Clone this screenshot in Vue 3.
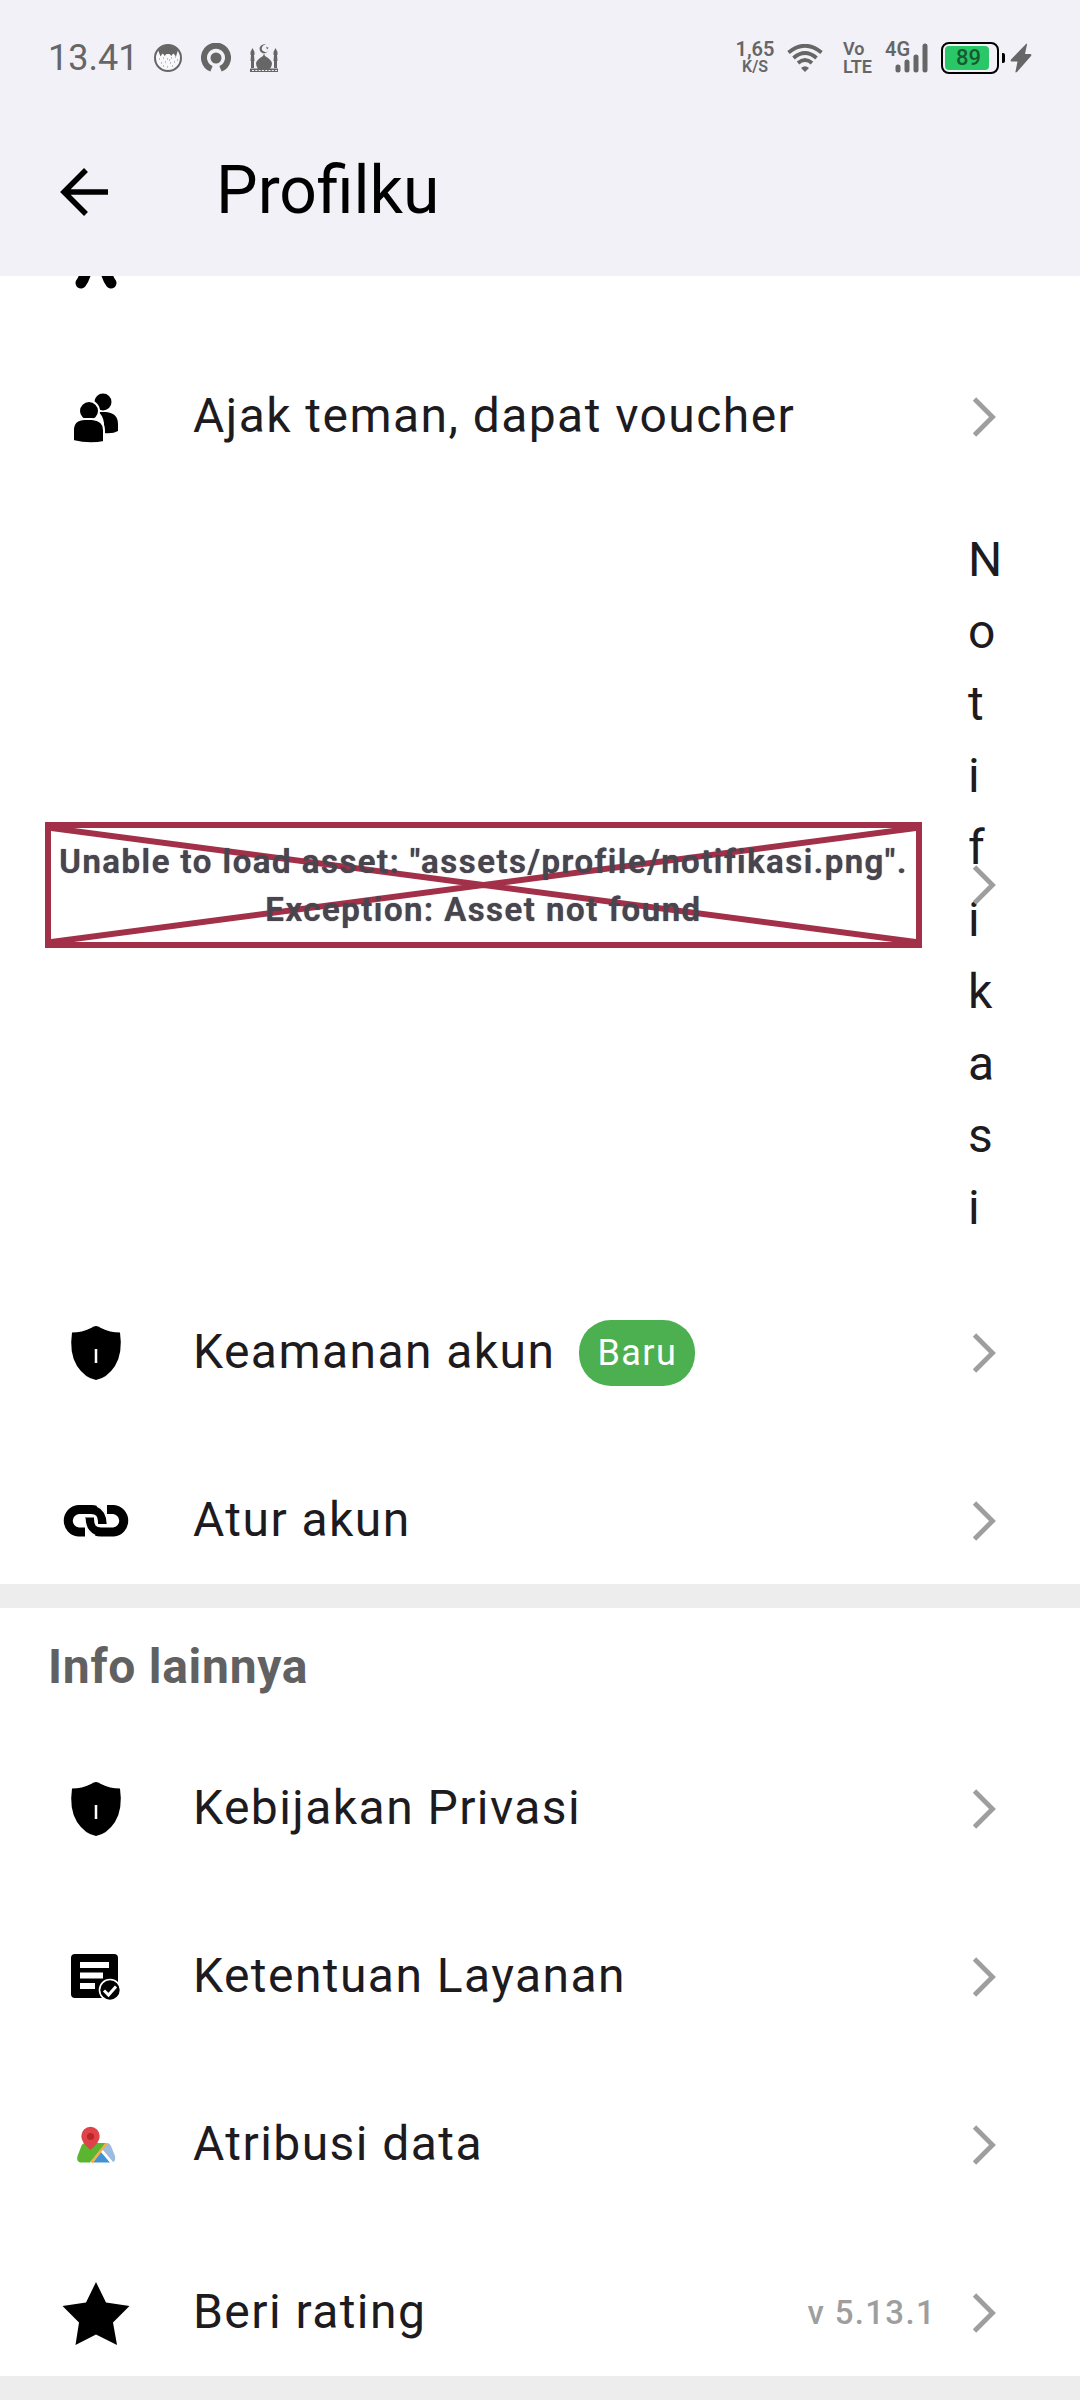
<script setup>
const accountItems = [
  { label: 'Ajak teman, dapat voucher', icon: 'people' },
  { label: 'Notifikasi', icon: 'missing' },
  { label: 'Keamanan akun', icon: 'shield', badge: 'Baru' },
  { label: 'Atur akun', icon: 'link' }
]

const infoItems = [
  { label: 'Kebijakan Privasi', icon: 'shield' },
  { label: 'Ketentuan Layanan', icon: 'terms' },
  { label: 'Atribusi data', icon: 'map' },
  { label: 'Beri rating', icon: 'star', note: 'v 5.13.1' }
]

const sections = [
  { id: 'account', title: '', items: accountItems },
  { id: 'info', title: 'Info lainnya', items: infoItems }
]
</script>

<template>
  <div class="screen">
    <header class="top">
      <div class="status">
        <div class="status-left">
          <span class="time">13.41</span>
          <svg class="status-icon" viewBox="0 0 30 30" aria-hidden="true">
            <circle cx="15" cy="15" r="13" fill="#f8f8fa" stroke="#666" stroke-width="2" />
            <path d="M5 7Q15-2 25 7L23 13.500L20.500 10.500Q19 11 18.500 13L16.500 11H13.500L11.500 13Q11 11 9.500 10.500L7.500 13.500Z" fill="#666" />
            <path d="M6 16h1M10 15h1M14 16h1M18 15h1M22 14h1M8 20h1M12 19h1M17 20h1M21 19h1M14 24h1M10 23h1M19 23h1M16 17h1M24 17h1" stroke="#888" stroke-width="1" />
          </svg>
          <svg class="status-icon" viewBox="0 0 30 30" aria-hidden="true">
            <path d="M10.500 25.800A12 12 0 1 1 19.500 25.800" fill="none" stroke="#666" stroke-width="6" stroke-linecap="butt" />
            <circle cx="15" cy="15" r="5.500" fill="#666" />
          </svg>
          <svg class="status-icon" viewBox="0 0 30 30" aria-hidden="true">
            <g fill="#666">
              <path d="M17.500 2A4.500 4.500 0 1 0 19 8A3.600 3.600 0 1 1 17.500 2Z" />
              <path d="M17 3.500l1.500 1 1-.5-.5 1.500-1 1z" />
              <path d="M15 10.500L16 13Q23 17 23 20.500Q23 23 21 26H9Q7 23 7 20.500Q7 17 14 13Z" />
              <path d="M3.500 5L5.500 9V12H5L5.500 18H5V25H2V18H1.500L2 12H1.500V9Z" />
              <path d="M26.500 5L28.500 9V12H28L28.500 18H28V25H25V18H24.500L25 12H24.500V9Z" />
              <path d="M1 25.500H29V29H1Z" />
            </g>
            <path d="M3 27.500H28" stroke="#f2f1f7" stroke-width="1.200" stroke-dasharray="2 1.300" />
          </svg>
        </div>
        <div class="status-right">
          <span class="speed"><span>1,65</span><small>K/S</small></span>
          <svg class="wifi" viewBox="0 0 36 28" aria-hidden="true">
            <g fill="none" stroke="#666" stroke-width="3.800">
              <path d="M1.500 8.500Q18-5 34.500 8.500" />
              <path d="M6.500 14Q18 4 29.500 14" />
              <path d="M11 19Q18 13 25 19" />
            </g>
            <path d="M14 24Q18 20.500 22 24L18 28Z" fill="#666" />
          </svg>
          <span class="volte">Vo<br />LTE</span>
          <span class="signal">
            <span class="network">4G</span>
            <svg viewBox="0 0 34 30" aria-hidden="true">
              <path d="M3 24V27M12 19V27M21 14V27M30 3V27" fill="none" stroke="#666" stroke-width="5" stroke-linecap="round" />
            </svg>
          </span>
          <span class="power">
            <span class="battery"><span class="level">89</span></span>
            <span class="nub"></span>
            <svg class="bolt" viewBox="0 0 22 30" aria-hidden="true">
              <path d="M16 1Q17 0 17 1.500L15 11H20.500Q22 11.500 21 13L7 29Q5 30 5.500 28.500L7.500 18.500H1.500Q0 18 1 16.500Z" fill="#666" />
            </svg>
          </span>
        </div>
      </div>
      <div class="toolbar">
        <button class="back" type="button" aria-label="Kembali">
          <svg viewBox="0 0 48 48" aria-hidden="true">
            <path d="M26 2L4 24L26 46M3 24H48" fill="none" stroke="#000" stroke-width="5.500" />
          </svg>
        </button>
        <h1>Profilku</h1>
      </div>
    </header>

    <main>
      <section v-for="section in sections" :key="section.id" class="section">
        <div v-if="section.id === 'account'" class="partial">
          <svg viewBox="0 0 96 36" aria-hidden="true">
            <path d="M33 7Q36 3 38 -4M63 7Q60 3 58 -4" fill="none" stroke="#000" stroke-width="11" stroke-linecap="round" />
          </svg>
        </div>
        <h2 v-if="section.title">{{ section.title }}</h2>

        <a
          v-for="item in section.items"
          :key="item.label"
          href="#"
          class="row"
          :class="{ broken: item.icon === 'missing' }"
        >
          <span v-if="item.icon === 'missing'" class="asset-error">
            <svg viewBox="0 0 100 100" preserveAspectRatio="none" aria-hidden="true">
              <path d="M0 0L100 100M0 100L100 0" />
            </svg>
            <span>Unable to load asset: "assets/profile/notifikasi.png".<br />Exception: Asset not found</span>
          </span>

          <svg v-else class="icon" viewBox="0 -1 96 96" aria-hidden="true">
            <g v-if="item.icon === 'people'">
              <circle cx="55" cy="33" r="8.500" />
              <path d="M50 43H58Q70 44 70 55V62Q65 65 56 64V54Q55 46 50 43Z" />
              <circle cx="41" cy="42" r="10" stroke="#fff" stroke-width="2" />
              <path d="M25 61Q25 50 37 50H44Q56 51 56 61V73Q41 76 25 72Z" stroke="#fff" stroke-width="2" />
            </g>
            <g v-else-if="item.icon === 'shield'">
              <path d="M48 21Q50 21 53 23Q62 27.500 72 27.500Q75 48 67 61Q59 73 48 75Q37 73 29 61Q21 48 24 27.500Q34 27.500 43 23Q46 21 48 21Z" />
              <path d="M48 44V58" stroke="#fff" stroke-width="2.500" />
            </g>
            <g v-else-if="item.icon === 'link'" fill="none" stroke="#000" stroke-width="9">
              <path d="M37 59H30.500A11.300 11.300 0 0 1 30.500 36.500H43Q54.500 36.500 54.500 49V51" />
              <path d="M59 36.500H65.500A11.300 11.300 0 0 1 65.500 59H53Q41.500 59 41.500 46V44.500" />
              <path d="M49 33Q59 37 59.500 51M47 62.500Q37 58 36.800 45" stroke="#fff" stroke-width="1.600" />
            </g>
            <g v-else-if="item.icon === 'terms'">
              <rect x="23" y="25" width="47" height="44" rx="4" />
              <path d="M32 36H61M32 46.500H55M32 57H47" stroke="#fff" stroke-width="6" />
              <circle cx="62" cy="61" r="10.500" stroke="#fff" stroke-width="1.600" />
              <path d="M56 61.500L60.500 66L68 57.500" fill="none" stroke="#fff" stroke-width="3" />
            </g>
            <g v-else-if="item.icon === 'map'" transform="translate(0 7)">
              <path d="M38 39H58L42 58.500H32Q28 57 29.500 52L33 43Q34 39 38 39Z" fill="#5bb531" />
              <path d="M57 39.500Q61 37.500 63 42L67 52Q68 57 65 58L54 45Z" fill="#9bbce0" />
              <path d="M53 48L62 58.500H45Z" fill="#4292d3" />
              <path d="M58.500 39.500L43.500 58.500" stroke="#f5ae42" stroke-width="2.400" />
              <path d="M54 47L63.500 58.500" stroke="#fff" stroke-width="2" />
              <path d="M42.500 46Q33 38 33.300 32A9.200 9.200 0 0 1 51.700 32Q52 38 42.500 46Z" fill="#de4349" />
              <circle cx="42.500" cy="32.500" r="3.600" fill="#bd2427" />
            </g>
            <path v-else d="M48 17L58 37.500L81.500 41L65 57.500L69 80L48 69.500L27.500 80L31 57.500L14.500 41L38 37.500Z" />
          </svg>

          <span class="label">{{ item.label }}</span>
          <span v-if="item.badge" class="badge">{{ item.badge }}</span>
          <span class="trail">
            <span v-if="item.note" class="note">{{ item.note }}</span>
            <svg class="chevron" viewBox="0 -1 48 48" aria-hidden="true">
              <path d="M14.500 6L32.500 24L14.500 42" fill="none" stroke="#9e9e9e" stroke-width="4.800" />
            </svg>
          </span>
        </a>
      </section>
    </main>
  </div>
</template>

<style>
body {
  background: #fff;
}
</style>

<style scoped>
.screen {
  font-family: Roboto, "Liberation Sans", sans-serif;
  color: #1d1b20;
  background: #fff;
}

svg {
  display: block;
}

.top {
  background: #f2f1f7;
  color: #000;
}

.status {
  display: flex;
  justify-content: space-between;
  align-items: center;
  height: 108px;
  padding: 8px 48px 0;
  box-sizing: border-box;
  color: #666;
}

.status-left {
  display: flex;
  align-items: center;
  gap: 18px;
}

.time {
  font-size: 36px;
  line-height: 42px;
  margin-right: -3px;
}

.status-icon {
  width: 30px;
  height: 30px;
}

.status-right {
  display: flex;
  align-items: center;
  gap: 12px;
  font-weight: 600;
}

.speed {
  display: flex;
  flex-direction: column;
  align-items: center;
  width: 40px;
  font-size: 20px;
  line-height: 18px;
}

.speed small {
  font-size: 16px;
}

.wifi {
  width: 36px;
  height: 28px;
}

.volte {
  width: 38px;
  padding-left: 8px;
  box-sizing: border-box;
  font-size: 18px;
  line-height: 18px;
}

.signal {
  position: relative;
  display: flex;
  justify-content: flex-end;
  width: 44px;
}

.signal svg {
  width: 34px;
  height: 30px;
}

.network {
  position: absolute;
  left: 0;
  top: -6px;
  font-size: 20px;
  line-height: 24px;
}

.power {
  display: flex;
  align-items: center;
  gap: 3px;
}

.battery {
  display: flex;
  width: 58px;
  height: 32px;
  padding: 2px;
  border: 2px solid #000;
  border-radius: 8px;
  box-sizing: border-box;
}

.level {
  width: 44px;
  padding-left: 3px;
  box-sizing: border-box;
  border-radius: 4px;
  background: #2ac769;
  color: #175a31;
  font-size: 22px;
  font-weight: 500;
  line-height: 24px;
  text-align: center;
}

.nub {
  width: 3px;
  height: 10px;
  border-radius: 0 2px 2px 0;
  background: #000;
}

.bolt {
  width: 22px;
  height: 30px;
  margin-left: 2px;
}

.toolbar {
  display: flex;
  align-items: center;
  height: 168px;
  padding: 0 60px;
}

.back {
  padding: 0;
  border: 0;
  background: none;
}

.back svg {
  width: 48px;
  height: 48px;
}

h1 {
  margin: 0 0 2px 108px;
  font-size: 66px;
  font-weight: 400;
  line-height: 84px;
}

.section {
  display: flex;
  flex-direction: column;
  gap: 40px;
  border-bottom: 24px solid #ededed;
}

.partial {
  height: 36px;
  padding-left: 48px;
}

.partial svg {
  width: 96px;
  height: 36px;
}

h2 {
  margin: 0;
  padding: 23px 48px 1px;
  color: #616161;
  font-size: 48px;
  font-weight: 700;
  line-height: 72px;
  letter-spacing: 0.015em;
}

.row {
  position: relative;
  display: flex;
  align-items: center;
  min-height: 128px;
  padding: 4px 72px 4px 48px;
  box-sizing: border-box;
  color: inherit;
  text-decoration: none;
}

.icon {
  flex: none;
  width: 96px;
  height: 96px;
  margin-right: 49px;
}

.label {
  font-size: 48px;
  line-height: 72px;
  letter-spacing: 0.03em;
}

.badge {
  margin: 1px 0 0 24px;
  padding: 0 18px;
  border-radius: 32px;
  background: #4caf50;
  color: #fff;
  font-size: 36px;
  line-height: 66px;
  letter-spacing: 0.04em;
}

.trail {
  display: flex;
  align-items: center;
  gap: 24px;
  margin-left: auto;
}

.note {
  padding-top: 2px;
  color: #9e9e9e;
  font-size: 33px;
  font-weight: 500;
  line-height: 48px;
  letter-spacing: 0.04em;
}

.chevron {
  width: 48px;
  height: 48px;
}

.broken {
  padding-left: 45px;
}

.broken .label {
  flex: none;
  width: 12px;
  margin: 0 28px 0 46px;
  word-break: break-all;
}

.broken .trail {
  position: absolute;
  right: 72px;
}

.asset-error {
  position: relative;
  flex: 1;
  margin-top: 2px;
  padding: 10px 0 8px;
  border: 6px solid #a23048;
  color: #49454f;
  font-size: 33px;
  font-weight: 600;
  line-height: 48px;
  letter-spacing: 0.045em;
  text-align: center;
  text-shadow: 0 0 1px #49454f;
}

.asset-error svg {
  position: absolute;
  inset: 0;
  width: 100%;
  height: 100%;
}

.asset-error path {
  fill: none;
  stroke: #a23048;
  stroke-width: 6px;
  vector-effect: non-scaling-stroke;
}

.asset-error span {
  position: relative;
  white-space: nowrap;
}
</style>
